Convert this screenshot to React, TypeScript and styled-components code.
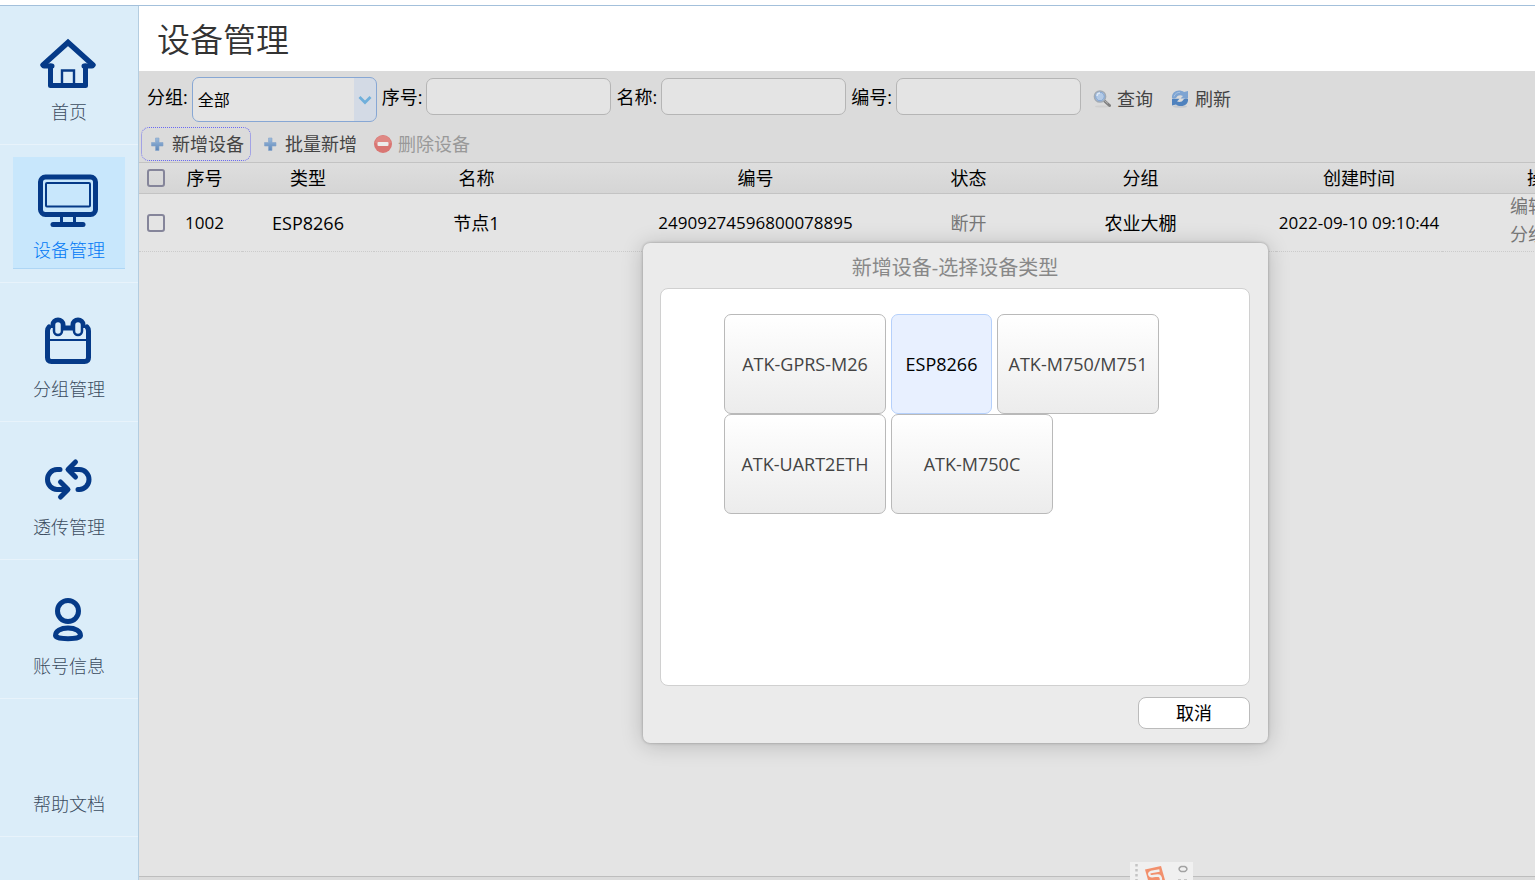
import React from "react";
import styled, { createGlobalStyle } from "styled-components";

const fontStack = '"Open Sans", "Noto Sans CJK SC", sans-serif';

const GlobalStyle = createGlobalStyle`
  *, *::before, *::after { box-sizing: border-box; }
  body {
    margin: 0;
    background: #fff;
    color: #000;
    font: 18px/24px ${fontStack};
  }
  button, input, select { font: inherit; color: inherit; margin: 0; }
`;

const Page = styled.div`
  display: flex;
  flex-direction: column;
  min-height: 100vh;
  padding-top: 5px;
  overflow: hidden;
`;

const Shell = styled.div`
  display: flex;
  flex: 1;
  border-top: 1px solid #a3c0db;
`;

const Sidebar = styled.nav`
  flex: none;
  width: 139px;
  background: #dbedf9;
  border-right: 1px solid #b4cde0;
`;

const NavList = styled.ul`
  display: grid;
  grid-template-rows: repeat(6, 1fr);
  height: 831px;
  margin: 0;
  padding: 0;
  list-style: none;
`;

const NavItem = styled.li`
  display: flex;
  align-items: center;
  justify-content: center;
  border-bottom: 1px solid #e8f3fb;
`;

const NavLink = styled.a<{ $active?: boolean }>`
  display: flex;
  flex-direction: column;
  align-items: center;
  width: 112px;
  height: 112px;
  padding-top: 13px;
  text-decoration: none;
  font-weight: 300;
  color: ${(p) => (p.$active ? "#0078f5" : "#3b4c60")};
  background: ${(p) => (p.$active ? "#c8e7fc" : "transparent")};
  border-bottom: 1px solid ${(p) => (p.$active ? "#aed6f5" : "transparent")};
`;

const NavIcon = styled.span`
  display: block;
  width: 64px;
  height: 64px;
  margin: 0 2px 4px 0;
  svg { display: block; }
`;

const Main = styled.main`
  position: relative;
  display: flex;
  flex: 1;
  flex-direction: column;
  min-width: 0;
  overflow: hidden;
  background: #e4e4e4;
`;

const Title = styled.h1`
  margin: 0;
  padding: 10px 18px 7px;
  background: #fff;
  color: #333;
  font-size: 33px;
  line-height: 48px;
  font-weight: 350;
`;

const Toolbar = styled.div`
  background: #dbdbdb;
  padding: 6px 2px 1px;
`;

const SearchRow = styled.form`
  display: flex;
  align-items: flex-start;
  padding-left: 6px;
`;

const Field = styled.label`
  display: flex;
  align-items: flex-start;
  gap: 4px;
  margin-right: 5px;
  line-height: 40px;
  white-space: nowrap;
`;

const TextBox = styled.input`
  width: 185px;
  height: 37px;
  margin-top: 1px;
  padding: 0 8px;
  background: #e4e4e4;
  border: 1px solid #b5b5b5;
  border-radius: 7px;
`;

const SelectWrap = styled.span`
  display: grid;
  width: 185px;
  height: 45px;
  overflow: hidden;
  border: 1px solid #87a7d4;
  border-radius: 7px;
  background: linear-gradient(to right, #e4e4e4 161px, #d3dae5 161px);
  > * { grid-area: 1 / 1; }
  svg { align-self: center; justify-self: end; margin-right: 4px; pointer-events: none; }
`;

const Select = styled.select`
  appearance: none;
  width: 100%;
  padding: 0 5px;
  border: 0;
  outline: 0;
  background: transparent;
  font-size: 16px;
`;

const ToolButton = styled.button<{ $focused?: boolean }>`
  display: flex;
  align-items: center;
  gap: 6px;
  height: 34px;
  padding: 0 6px;
  background: transparent;
  border: 1px dotted ${(p) => (p.$focused ? "#6a6af0" : "transparent")};
  border-radius: 8px;
  color: #444;
  white-space: nowrap;
  &:disabled { color: #999; }
  svg { flex: none; }
`;

const SearchActions = styled.div`
  display: flex;
  gap: 4px;
  padding-top: 5px;
`;

const ActionRow = styled.div`
  display: flex;
  gap: 3px;
  padding-top: 5px;
`;

const Grid = styled.table`
  flex: none;
  width: 1509px;
  table-layout: fixed;
  border-collapse: separate;
  border-spacing: 0;
  text-align: center;
  white-space: nowrap;
`;

const Head = styled.th`
  height: 32px;
  padding: 0;
  font-weight: 400;
  border: solid #c3c3c3;
  border-width: 1px 0;
  background: linear-gradient(#dedede, #d5d5d5);
`;

const Cell = styled.td<{ $latin?: boolean; $muted?: boolean }>`
  height: 58px;
  padding: 0;
  border-bottom: 1px dotted #cbcbcb;
  font-size: ${(p) => (p.$latin ? "17px" : "18px")};
  color: ${(p) => (p.$muted ? "#777" : "#000")};
`;

const Check = styled.input`
  appearance: none;
  display: block;
  width: 18px;
  height: 18px;
  margin-left: 8px;
  border: 2px solid #85859a;
  border-radius: 3px;
`;

const CellLinks = styled.div`
  display: flex;
  flex-direction: column;
  align-items: flex-start;
  gap: 4px;
  padding: 0 0 5px 68px;
`;

const CellLink = styled.a`
  color: #777;
  text-decoration: none;
`;

const StatusBar = styled.footer`
  height: 4px;
  margin-top: auto;
  background: #dbdbdb;
  border-top: 1px solid #bdbdbd;
`;

const Dialog = styled.section`
  position: absolute;
  left: 504px;
  top: 237px;
  width: 625px;
  padding: 13px 18px 14px 17px;
  background: #ebebeb;
  border-radius: 7px;
  box-shadow: 0 0 3px rgba(0, 0, 0, 0.3), 0 2px 22px rgba(0, 0, 0, 0.2);
`;

const DialogTitle = styled.h2`
  margin: 0 0 8px;
  color: #888;
  font-size: 20px;
  line-height: 24px;
  font-weight: 400;
  text-align: center;
`;

const DialogPanel = styled.div`
  display: flex;
  flex-wrap: wrap;
  align-content: flex-start;
  column-gap: 5px;
  height: 398px;
  padding: 25px 63px;
  background: #fff;
  border: 1px solid #d0d0d0;
  border-radius: 8px;
`;

const TypeButton = styled.button<{ $selected?: boolean }>`
  width: ${(p) => (p.$selected ? "101px" : "162px")};
  height: 100px;
  padding: 0;
  border: 1px solid ${(p) => (p.$selected ? "#b5d0fb" : "#b9b9b9")};
  border-radius: 7px;
  background: ${(p) => (p.$selected ? "#e8f0ff" : "linear-gradient(#fff, #ececec)")};
  color: ${(p) => (p.$selected ? "#000" : "#444")};
`;

const DialogFooter = styled.div`
  display: flex;
  justify-content: flex-end;
  padding-top: 11px;
`;

const CancelButton = styled.button`
  width: 112px;
  height: 32px;
  padding: 0;
  background: #fff;
  border: 1px solid #bbb;
  border-radius: 8px;
`;

const InputMethodBar = styled.div`
  position: absolute;
  left: 991px;
  bottom: 0;
  width: 63px;
  height: 18px;
  background: #f0f0f0;
  svg { display: block; }
`;

const navy = "#053a88";

const HomeIcon = () => (
  <svg width="64" height="64" viewBox="0 0 64 64" fill="none" stroke={navy} strokeLinecap="round" strokeLinejoin="round">
    <path d="M7 33 32 10.500l25 22.500" strokeWidth="5.4" strokeLinejoin="miter" />
    <path d="M8 34h8M48 34h8" strokeWidth="5" />
    <path d="M14.500 34v19.500h35V34" strokeWidth="5" />
    <path d="M26 52V38.500h12V52" strokeWidth="2.400" strokeLinejoin="miter" />
  </svg>
);

const MonitorIcon = () => (
  <svg width="64" height="64" viewBox="0 0 64 64" fill="none" stroke={navy}>
    <rect x="4.500" y="7" width="55" height="37.500" rx="5" strokeWidth="5" />
    <rect x="10" y="13" width="44" height="23.500" rx="1" strokeWidth="2" />
    <path d="M25.500 46v7M38.500 46v7" strokeWidth="3" />
    <path d="M17 54.500h30" strokeWidth="5" strokeLinecap="round" />
  </svg>
);

const CalendarIcon = () => (
  <svg width="64" height="64" viewBox="0 0 64 64" fill="none" stroke={navy}>
    <path d="M13 18q-1.500 1.500-1.500 4v26.500q0 4 4 4h33q4 0 4-4V22q0-2.500-1.500-4" strokeWidth="5" strokeLinecap="round" />
    <path d="M26 19h12" strokeWidth="5" />
    <path d="M12 31h40" strokeWidth="2" />
    <rect x="18" y="12" width="8" height="14" rx="4" strokeWidth="2.500" />
    <rect x="38" y="12" width="8" height="14" rx="4" strokeWidth="2.500" />
    <path d="M16.500 19v-3.500a5.500 5 0 0 1 11 0V20M36.500 20v-4.500a5.500 5 0 0 1 11 0V19" strokeWidth="4" />
  </svg>
);

const TransferIcon = () => (
  <svg width="64" height="64" viewBox="0 0 64 64" fill="none" stroke={navy} strokeWidth="5" strokeLinecap="round" strokeLinejoin="round">
    <path d="M24 22.500h-3a9.500 10 0 0 0 0 20h10M24.500 35l7.500 7.500-7.500 7.500" />
    <path d="M42 42.500h1.500a9.500 10 0 0 0 0-20H33M39.500 15 32 22.500l7.500 7.500" />
  </svg>
);

const UserIcon = () => (
  <svg width="64" height="64" viewBox="0 0 64 64" fill="none" stroke={navy} strokeWidth="5">
    <circle cx="32" cy="25" r="10.500" />
    <path d="M19.500 49.500c0-4.500 5-7.500 12.500-7.500s12.500 3 12.500 7.500c0 2-5.500 3.200-12.500 3.200s-12.500-1.200-12.500-3.200z" />
  </svg>
);

const PlusIcon = () => (
  <svg width="18" height="18" viewBox="0 0 18 18">
    <defs>
      <linearGradient id="plus" x1="0" y1="0" x2="0" y2="1">
        <stop offset="0" stopColor="#9dbbdc" />
        <stop offset="1" stopColor="#5c86b9" />
      </linearGradient>
    </defs>
    <path d="M7.500 3H11v4.500h4V11h-4v4.500H7.500V11h-4V7.500h4z" fill="url(#plus)" stroke="#86a5cb" strokeWidth=".6" />
  </svg>
);

const RemoveIcon = () => (
  <svg width="18" height="18" viewBox="0 0 18 18">
    <circle cx="9" cy="9" r="9" fill="#d97673" />
    <path d="M1 8a8 7.500 0 0 1 16 0q-8 3-16 0z" fill="#e29490" opacity=".6" />
    <rect x="3.500" y="7" width="11" height="4" rx="1" fill="#ececec" />
  </svg>
);

const SearchIcon = () => (
  <svg width="18" height="18" viewBox="0 0 18 18" fill="none">
    <ellipse cx="9" cy="16.500" rx="7" ry="1" fill="#cfcfcf" />
    <path d="m11.500 11 5 4.500" stroke="#808080" strokeWidth="3" strokeLinecap="round" />
    <path d="m12 11 3 2.500" stroke="#b5b5b5" strokeWidth="1" />
    <circle cx="7" cy="6.500" r="5.600" fill="#b3cae6" stroke="#a2abb5" strokeWidth="1.500" />
    <circle cx="7" cy="6.500" r="4.300" stroke="#7fa3d2" strokeWidth="1" />
    <path d="M4 6a3 3 0 0 1 3-3" stroke="#dfe9f5" strokeWidth="1.500" />
  </svg>
);

const RefreshIcon = () => (
  <svg width="18" height="18" viewBox="0 0 18 18">
    <ellipse cx="9" cy="16.500" rx="7" ry="1.300" fill="#c4c8ce" />
    <path d="M1 8C.5 3.500 4 .5 8 .5c2 0 3.700.5 5 1.500l4-1v7.500H9.500L12 6C9.500 4.500 6.500 5 5.500 7.500q-2 1.500-4.500.5z" fill="#7ea4d2" />
    <path d="M17 9c.5 4.500-3 7-7 7-2 0-3.700-.5-5-1.500l-4 1V8.800h7.500L6 11.500c2.500 1 5.500.5 6.500-2q2-1.500 4.500-.5z" fill="#4f82be" />
    <path d="M3 6.500C4 3.500 6.500 2.300 9 2.300" fill="none" stroke="#a9c4e3" strokeWidth="1" />
  </svg>
);

const ChevronIcon = () => (
  <svg width="14" height="10" viewBox="0 0 14 10" fill="none">
    <path d="M1.500 2 7 7.500 12.500 2" stroke="#6fafdb" strokeWidth="2.800" />
  </svg>
);

const InputMethodIcon = () => (
  <svg width="63" height="18" viewBox="0 0 63 18" fill="none">
    <path d="M6.500 2v16" stroke="#c4c4c4" strokeWidth="2.500" strokeDasharray="2.500 2.500" />
    <path d="M15 7.500 31 4l4 14H18z" fill="#f2906d" />
    <path d="M29.500 8.500 21 10q-2.500 1-1.500 3t4 1l4-.5q3.500 0 3.500 4.500" stroke="#f0f0f0" strokeWidth="2.400" />
    <path d="M51 4.500q-4 2.500 0 5M55 4.500q4 2.500 0 5M51 4.500h4M51 9.500h4" stroke="#a2a2a2" strokeWidth="1.500" />
    <path d="M48 17.500h3M54 17.500h3" stroke="#c8c8c8" />
  </svg>
);

const navItems = [
  { label: "首页", icon: <HomeIcon /> },
  { label: "设备管理", icon: <MonitorIcon />, active: true },
  { label: "分组管理", icon: <CalendarIcon /> },
  { label: "透传管理", icon: <TransferIcon /> },
  { label: "账号信息", icon: <UserIcon /> },
  { label: "帮助文档", icon: null },
];

const columns = [
  { label: "序号", width: 75 },
  { label: "类型", width: 132 },
  { label: "名称", width: 205 },
  { label: "编号", width: 353 },
  { label: "状态", width: 73 },
  { label: "分组", width: 271 },
  { label: "创建时间", width: 166 },
  { label: "操作", width: 206 },
];

const deviceTypes = ["ATK-GPRS-M26", "ESP8266", "ATK-M750/M751", "ATK-UART2ETH", "ATK-M750C"];

export default function App() {
  return (
    <Page>
      <GlobalStyle />
      <Shell>
        <Sidebar>
          <NavList>
            {navItems.map((item) => (
              <NavItem key={item.label}>
                <NavLink href="#" $active={item.active}>
                  <NavIcon>{item.icon}</NavIcon>
                  {item.label}
                </NavLink>
              </NavItem>
            ))}
          </NavList>
        </Sidebar>
        <Main>
          <Title>设备管理</Title>
          <Toolbar>
            <SearchRow>
              <Field>
                分组:
                <SelectWrap>
                  <Select defaultValue="全部">
                    <option>全部</option>
                  </Select>
                  <ChevronIcon />
                </SelectWrap>
              </Field>
              {["序号:", "名称:", "编号:"].map((label) => (
                <Field key={label}>
                  {label}
                  <TextBox type="text" />
                </Field>
              ))}
              <SearchActions>
                <ToolButton type="button"><SearchIcon />查询</ToolButton>
                <ToolButton type="button"><RefreshIcon />刷新</ToolButton>
              </SearchActions>
            </SearchRow>
            <ActionRow>
              <ToolButton type="button" $focused><PlusIcon />新增设备</ToolButton>
              <ToolButton type="button"><PlusIcon />批量新增</ToolButton>
              <ToolButton type="button" disabled><RemoveIcon />删除设备</ToolButton>
            </ActionRow>
          </Toolbar>
          <Grid>
            <colgroup>
              <col width={28} />
              {columns.map((c) => <col key={c.label} width={c.width} />)}
            </colgroup>
            <thead>
              <tr>
                <Head><Check type="checkbox" aria-label="全选" /></Head>
                {columns.map((c) => <Head key={c.label}>{c.label}</Head>)}
              </tr>
            </thead>
            <tbody>
              <tr>
                <Cell><Check type="checkbox" aria-label="选择 1002" /></Cell>
                <Cell $latin>1002</Cell>
                <Cell>ESP8266</Cell>
                <Cell>节点1</Cell>
                <Cell $latin>24909274596800078895</Cell>
                <Cell $muted>断开</Cell>
                <Cell>农业大棚</Cell>
                <Cell $latin>2022-09-10 09:10:44</Cell>
                <Cell>
                  <CellLinks>
                    <CellLink href="#">编辑</CellLink>
                    <CellLink href="#">分组</CellLink>
                  </CellLinks>
                </Cell>
              </tr>
            </tbody>
          </Grid>
          <StatusBar />
          <Dialog role="dialog" aria-labelledby="dialog-title">
            <DialogTitle id="dialog-title">新增设备-选择设备类型</DialogTitle>
            <DialogPanel>
              {deviceTypes.map((type) => (
                <TypeButton key={type} type="button" $selected={type === "ESP8266"}>{type}</TypeButton>
              ))}
            </DialogPanel>
            <DialogFooter>
              <CancelButton type="button">取消</CancelButton>
            </DialogFooter>
          </Dialog>
          <InputMethodBar><InputMethodIcon /></InputMethodBar>
        </Main>
      </Shell>
    </Page>
  );
}
